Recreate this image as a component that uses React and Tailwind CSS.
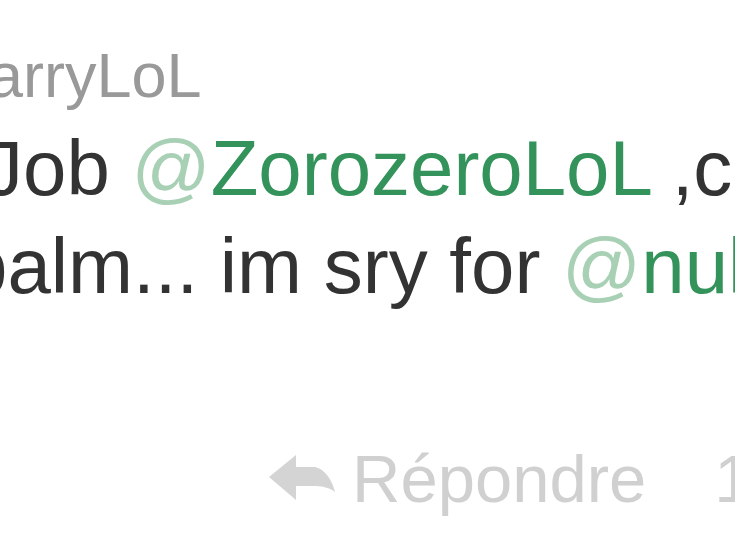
import React from 'react';

const ReplyArrow = () => (
  <svg width="66" height="50" viewBox="0 0 66 50" className="shrink-0">
    <path
      d="M0 23 L27 1 L27 13 L46 13 C56 15 63 26 66 38 C60 33 52 32 44 32 L27 32 L27 46 Z"
      fill="#d4d4d4"
    />
  </svg>
);

export default function App() {
  return (
    <div
      className="w-[735px] h-[550px] overflow-hidden bg-white text-[#333] whitespace-nowrap"
      style={{ fontFamily: '"Liberation Sans", Arial, sans-serif' }}
    >
      <div className="pt-[40px] flex flex-col">
        {/* screen name */}
        <div className="ml-[-12px] text-[63px] leading-[70px] text-[#999]">arryLoL</div>

        {/* tweet text */}
        <div className="mt-[9px] ml-[-16px] text-[78px] leading-[98px]">
          Job{' '}
          <a className="text-[#33935a]">
            <span className="text-[#a8d0b4]">@</span>ZorozeroLoL
          </a>{' '}
          ,c
        </div>
        <div className="ml-[-36px] text-[78px] leading-[98px]">
          palm... im sry for{' '}
          <a className="text-[#33935a]">
            <span className="text-[#a8d0b4]">@</span>nul
          </a>
        </div>

        {/* actions */}
        <div className="mt-[129px] ml-[269px] flex items-center text-[#d0d0d0] text-[67px] leading-[70px]">
          <ReplyArrow />
          <span className="ml-[17px]">Répondre</span>
          <span className="ml-[68px]">1</span>
        </div>
      </div>
    </div>
  );
}
